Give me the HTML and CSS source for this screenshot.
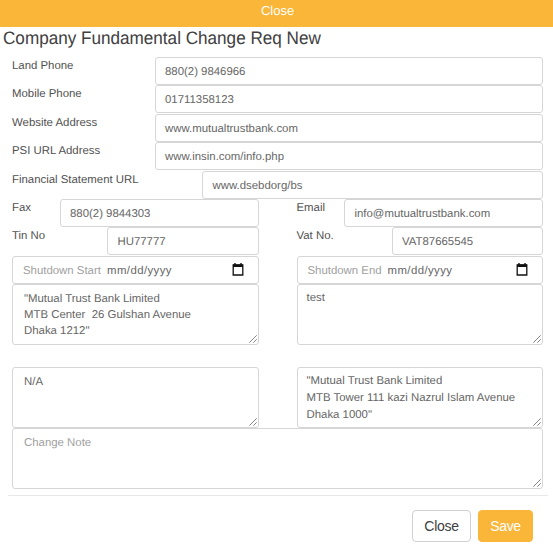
FILE: index.html
```html
<!DOCTYPE html>
<html lang="en">
<head>
<meta charset="utf-8">
<title>Company Fundamental Change Req New</title>
<link rel="stylesheet" href="styles.css">
</head>
<body>
<svg width="0" height="0" class="defs"><defs>
<symbol id="calendar" viewBox="0 0 12 13"><path d="M1.2 2h9.6v10H1.2z" fill="none" stroke="#111" stroke-width="1.3"/><path d="M1 1.4h10v2.6H1zM2.3 0h1.4v2H2.3zM8.3 0h1.4v2H8.3z" fill="#111"/></symbol>
<symbol id="grip" viewBox="0 0 8 8"><path d="M.3 7.7L7.7.3M4.3 7.7l3.4-3.4" fill="none" stroke="#777" stroke-width=".9"/></symbol>
</defs></svg>
<div class="topbar"><span>Close</span></div>
<h1><span>Company Fundamental Change Req New</span></h1>
<main class="form">
  <div class="row"><label>Land Phone</label><div class="field">880(2) 9846966</div></div>
  <div class="row"><label>Mobile Phone</label><div class="field">01711358123</div></div>
  <div class="row"><label>Website Address</label><div class="field">www.mutualtrustbank.com</div></div>
  <div class="row"><label>PSI URL Address</label><div class="field">www.insin.com/info.php</div></div>
  <div class="row wide"><label>Financial Statement URL</label><div class="field">www.dsebdorg/bs</div></div>
  <div class="pair">
    <div class="row short"><label>Fax</label><div class="field">880(2) 9844303</div></div>
    <div class="row short"><label>Email</label><div class="field">info@mutualtrustbank.com</div></div>
  </div>
  <div class="pair">
    <div class="row medium"><label>Tin No</label><div class="field">HU77777</div></div>
    <div class="row medium"><label>Vat No.</label><div class="field">VAT87665545</div></div>
  </div>
  <div class="pair">
    <div class="field date"><span class="hint">Shutdown Start</span><span class="mask">mm/dd/yyyy</span><svg class="cal"><use href="#calendar"/></svg></div>
    <div class="field date end"><span class="hint">Shutdown End</span><span class="mask">mm/dd/yyyy</span><svg class="cal"><use href="#calendar"/></svg></div>
  </div>
  <div class="pair areas">
    <div class="area inset">"Mutual Trust Bank Limited
MTB Center&nbsp; 26 Gulshan Avenue
Dhaka 1212"<svg class="grip"><use href="#grip"/></svg></div>
    <div class="area">test<svg class="grip"><use href="#grip"/></svg></div>
  </div>
  <div class="pair areas lower">
    <div class="area inset">N/A<svg class="grip"><use href="#grip"/></svg></div>
    <div class="area">"Mutual Trust Bank Limited
MTB Tower 111 kazi Nazrul Islam Avenue
Dhaka 1000"<svg class="grip"><use href="#grip"/></svg></div>
  </div>
  <div class="area inset note">Change Note<svg class="grip"><use href="#grip"/></svg></div>
</main>
<footer><button class="btn">Close</button><button class="btn save">Save</button></footer>
</body>
</html>
```
FILE: styles.css
```css
* { box-sizing: border-box; }
body {
  margin: 0;
  height: 556px;
  overflow: hidden;
  background: #fff;
  color: #505050;
  font: 11.4px/16px "Liberation Sans", Arial, sans-serif;
  text-rendering: geometricPrecision;
}
.defs { position: absolute; }
.topbar {
  height: 27px;
  padding-top: 3px;
  background: #f9b638;
  color: #fff;
  text-align: center;
  font-size: 13px;
  text-indent: 2px;
}
h1 {
  height: 30px;
  margin: 0;
  padding: 0 3px;
  color: #404040;
  font-size: 18px;
  line-height: 23px;
  font-weight: 400;
  white-space: nowrap;
}
h1 span { display: inline-block; transform: scaleX(.951); transform-origin: left; }
.form { width: 530.5px; margin-left: 12px; }
.row, .pair { display: flex; height: 28.4px; }
.row { width: 100%; }
.row label { width: 142.5px; padding-top: 1px; white-space: nowrap; }
.row.wide label { width: 190px; }
.row.short label { width: 47.5px; }
.row.medium label { width: 95px; }
.pair { display: grid; grid-template-columns: 246.5px 246px; column-gap: 38px; }
.field {
  flex: 1;
  height: 28px;
  padding: 6px 9px 0 9.5px;
  border: 1px solid #d6d6d6;
  border-radius: 3px;
  color: #666;
  white-space: nowrap;
}
.date { display: flex; padding: 6px 14px 0 10px; }
.hint { width: 84px; color: #a0a0a0; }
.end .hint { width: 80px; }
.mask { letter-spacing: .42px; }
.cal { width: 12px; height: 13px; margin: 0 0 0 auto; }
.area {
  position: relative;
  height: 61px;
  padding: 5px 9px;
  border: 1px solid #d6d6d6;
  border-radius: 3px;
  color: #666;
  line-height: 16.6px;
  white-space: pre;
}
.inset { padding-top: 6px; padding-left: 11px; line-height: 16px; }
.grip { position: absolute; right: 1px; bottom: 1px; width: 8px; height: 8px; }
.areas { height: 83.3px; }
.areas.lower { height: 60.5px; }
.note { color: #a0a0a0; }
footer {
  display: flex;
  justify-content: flex-end;
  gap: 7px;
  margin: 6px 5px 0 8px;
  padding: 14px 15px 0 0;
  border-top: 1px solid #e8e8e8;
}
.btn {
  width: 59px;
  height: 32px;
  padding: 0;
  border: 1px solid #d0d0d0;
  border-radius: 4px;
  background: #fff;
  color: #404040;
  font: 14px "Liberation Sans", Arial, sans-serif;
  letter-spacing: -.3px;
}
.save { width: 55px; border-color: #f9b638; background: #f9b638; color: #fff; }
```
